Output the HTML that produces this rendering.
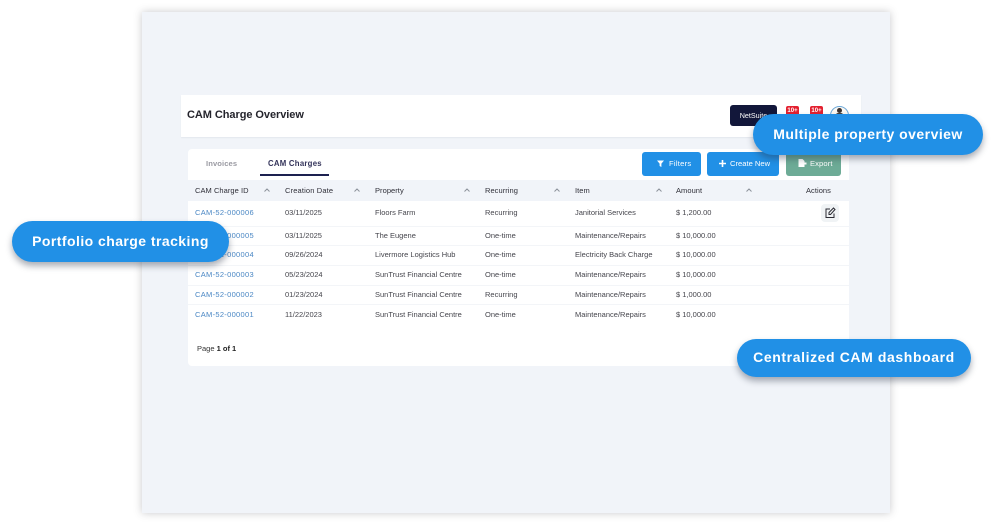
<!DOCTYPE html>
<html><head><meta charset="utf-8">
<style>
html,body{margin:0;padding:0;background:#fff;}
#p{position:relative;width:995px;height:524px;overflow:hidden;background:#fff;font-family:"Liberation Sans",sans-serif;}
#p div{position:absolute;white-space:nowrap;}
.t{font-size:7.5px;line-height:10px;color:#45454c;}
.h{font-size:7.5px;line-height:10px;color:#2f2f38;top:186px;letter-spacing:.05px;}
.l{color:#4a87c4;left:195px;letter-spacing:.3px;}
.pill{background:#2190e6;border-radius:21px;color:#fff;font-weight:bold;box-shadow:0 4px 7px rgba(40,50,70,.4);}
.btn{border-radius:3px;color:#fff;font-size:7.6px;line-height:24px;height:24px;top:152px;}
.line{height:1px;background:#f3f5f8;left:188px;width:661px;}
</style></head><body>
<div id="p">
  <div style="left:142px;top:12px;width:748px;height:501px;background:#f1f4f9;box-shadow:0 0 8px rgba(60,60,70,.28)"></div>
  <div style="left:181px;top:95px;width:680px;height:42px;background:#fff;box-shadow:0 1px 1px rgba(60,70,90,.07)"></div>
  <div style="left:187px;top:108px;font-size:11px;line-height:14px;color:#24242c;font-weight:bold;letter-spacing:-.06px">CAM Charge Overview</div>
  <div style="left:730px;top:105px;width:47px;height:21px;background:#12173a;border-radius:3px;color:#fff;font-size:7.2px;line-height:21px;text-align:center;">NetSuite</div>
  <div style="left:786px;top:106px;width:13px;height:11px;background:#e3202f;border-radius:2px;color:#fff;font-size:6px;line-height:10px;text-align:center;font-weight:bold">10+</div>
  <div style="left:810px;top:106px;width:13px;height:11px;background:#e3202f;border-radius:2px;color:#fff;font-size:6px;line-height:10px;text-align:center;font-weight:bold">10+</div>
  <div style="left:830px;top:106px;width:17px;height:17px;border-radius:50%;border:1px solid #6da8d8;background:#fbf8f2"></div>
  <div style="left:837px;top:108px;width:5px;height:5px;background:#3b3230;border-radius:50%"></div>
  <div style="left:836px;top:113px;width:7px;height:8px;background:#4a4038;border-radius:2px"></div>

  <div style="left:188px;top:149px;width:661px;height:217px;background:#fff;border-radius:4px"></div>
  <div style="left:206px;top:159px;font-size:7.6px;line-height:10px;color:#9a9aa2;font-weight:bold;letter-spacing:.1px">Invoices</div>
  <div style="left:268px;top:159px;font-size:7.8px;line-height:10px;color:#33335a;font-weight:bold;letter-spacing:.25px">CAM Charges</div>
  <div style="left:260px;top:174px;width:69px;height:1.5px;background:#1d2150"></div>

  <div class="btn" style="left:642px;width:59px;background:#2190e6;"></div>
  <svg style="position:absolute;left:656px;top:159px" width="9" height="9" viewBox="0 0 9 9"><path d="M1 1.5H8L5.4 4.6V8L3.6 7V4.6Z" fill="#fff"/></svg>
  <div class="btn" style="left:669px;background:none;letter-spacing:.25px">Filters</div>
  <div class="btn" style="left:707px;width:72px;background:#2190e6"></div>
  <svg style="position:absolute;left:718px;top:159px" width="9" height="9" viewBox="0 0 9 9"><path d="M4.5 1V8M1 4.5H8" stroke="#fff" stroke-width="1.6"/></svg>
  <div class="btn" style="left:730px;background:none">Create New</div>
  <div class="btn" style="left:786px;width:55px;background:#6dab96"></div>
  <svg style="position:absolute;left:797px;top:158px" width="10" height="10" viewBox="0 0 10 10"><path d="M1.5 1H5.5L7.5 3V4.500H9.500V6.500H7.500V9H1.500Z" fill="#fff"/></svg>
  <div class="btn" style="left:810px;background:none;letter-spacing:.1px">Export</div>

  <div style="left:188px;top:180px;width:661px;height:21px;background:#f1f4f9"></div>
  <div class="h" style="left:195px">CAM Charge ID</div>
  <div class="h" style="left:285px;letter-spacing:.15px">Creation Date</div>
  <div class="h" style="left:375px">Property</div>
  <div class="h" style="left:485px">Recurring</div>
  <div class="h" style="left:575px">Item</div>
  <div class="h" style="left:676px">Amount</div>
  <div class="h" style="left:806px">Actions</div>
  <svg style="position:absolute;left:0;top:0" width="995" height="524" fill="none" stroke="#8d939c" stroke-width="1">
    <path d="M264.500 191.500L267 189L269.500 191.500M354.500 191.500L357 189L359.500 191.500M464.500 191.500L467 189L469.500 191.500M554.500 191.500L557 189L559.500 191.500M656.500 191.500L659 189L661.500 191.500M746.500 191.500L749 189L751.500 191.500"/>
  </svg>

  <div class="line" style="top:226px"></div>
  <div class="line" style="top:245px"></div>
  <div class="line" style="top:265px"></div>
  <div class="line" style="top:285px"></div>
  <div class="line" style="top:304px"></div>

  <div class="t l" style="top:208px">CAM-52-000006</div><div class="t" style="left:285px;top:208px">03/11/2025</div><div class="t" style="left:375px;top:208px">Floors Farm</div><div class="t" style="left:485px;top:208px">Recurring</div><div class="t" style="left:575px;top:208px">Janitorial Services</div><div class="t" style="left:676px;top:208px">$ 1,200.00</div>
  <div class="t l" style="top:231px">CAM-52-000005</div><div class="t" style="left:285px;top:231px">03/11/2025</div><div class="t" style="left:375px;top:231px">The Eugene</div><div class="t" style="left:485px;top:231px">One-time</div><div class="t" style="left:575px;top:231px">Maintenance/Repairs</div><div class="t" style="left:676px;top:231px">$ 10,000.00</div>
  <div class="t l" style="top:250px">CAM-52-000004</div><div class="t" style="left:285px;top:250px">09/26/2024</div><div class="t" style="left:375px;top:250px">Livermore Logistics Hub</div><div class="t" style="left:485px;top:250px">One-time</div><div class="t" style="left:575px;top:250px">Electricity Back Charge</div><div class="t" style="left:676px;top:250px">$ 10,000.00</div>
  <div class="t l" style="top:270px">CAM-52-000003</div><div class="t" style="left:285px;top:270px">05/23/2024</div><div class="t" style="left:375px;top:270px">SunTrust Financial Centre</div><div class="t" style="left:485px;top:270px">One-time</div><div class="t" style="left:575px;top:270px">Maintenance/Repairs</div><div class="t" style="left:676px;top:270px">$ 10,000.00</div>
  <div class="t l" style="top:290px">CAM-52-000002</div><div class="t" style="left:285px;top:290px">01/23/2024</div><div class="t" style="left:375px;top:290px">SunTrust Financial Centre</div><div class="t" style="left:485px;top:290px">Recurring</div><div class="t" style="left:575px;top:290px">Maintenance/Repairs</div><div class="t" style="left:676px;top:290px">$ 1,000.00</div>
  <div class="t l" style="top:310px">CAM-52-000001</div><div class="t" style="left:285px;top:310px">11/22/2023</div><div class="t" style="left:375px;top:310px">SunTrust Financial Centre</div><div class="t" style="left:485px;top:310px">One-time</div><div class="t" style="left:575px;top:310px">Maintenance/Repairs</div><div class="t" style="left:676px;top:310px">$ 10,000.00</div>

  <div style="left:821px;top:204px;width:18px;height:18px;background:#f0f3f5;border-radius:4px"></div>
  <svg style="position:absolute;left:824px;top:207px" width="12" height="12" viewBox="0 0 12 12" fill="none" stroke="#2b2b33" stroke-width="1"><path d="M6 2H2V10.500H10V6.500"/><path d="M5 7.500V5.500L9.500 1L11 2.500L6.500 7.500Z"/></svg>

  <div class="t" style="left:197px;top:344px;color:#333">Page <b style="color:#222">1 of 1</b></div>

  <div class="pill" style="left:753px;top:114px;width:230px;height:41px;font-size:14px;line-height:41px;text-align:center;letter-spacing:.47px">Multiple property overview</div>
  <div class="pill" style="left:12px;top:221px;width:217px;height:41px;font-size:14px;line-height:41px;text-align:center;letter-spacing:.44px">Portfolio charge tracking</div>
  <div class="pill" style="left:737px;top:339px;width:234px;height:38px;font-size:14px;line-height:37px;text-align:center;letter-spacing:.6px;border-radius:19px">Centralized CAM dashboard</div>
</div>
</body></html>
